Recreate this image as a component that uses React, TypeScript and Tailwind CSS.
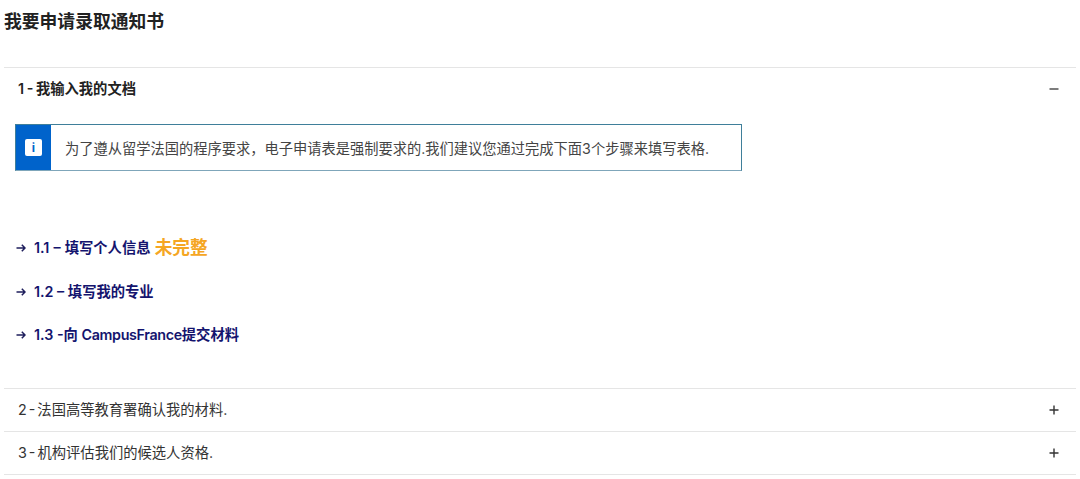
const font = "font-['Inter','Noto_Sans_CJK_SC',sans-serif]";

function ArrowIcon() {
  return (
    <svg width="10" height="10" viewBox="0 0 10 10" fill="none" stroke="#1e1e5c" strokeWidth="1.5" className="shrink-0">
      <path d="M0.5 5H9M5.8 1.8L9 5L5.8 8.2" />
    </svg>
  );
}

function StepLink({ children, extra }: { children: React.ReactNode; extra?: React.ReactNode }) {
  return (
    <div className="flex items-center h-[24px]">
      <ArrowIcon />
      <a className="ml-[8px] text-[14.3px] font-semibold text-[#14146e] whitespace-pre">{children}</a>
      {extra}
    </div>
  );
}

function Row({ label }: { label: string }) {
  return (
    <div className="flex items-center justify-between h-[43px] border-b border-[#e5e5e5] pl-[14px] pr-[17px]">
      <span className="text-[14.3px] text-[#333333] [word-spacing:-2px]">{label}</span>
      <svg width="10" height="10" viewBox="0 0 10 10" stroke="#333333" strokeWidth="1.4">
        <path d="M0.5 5H9.5M5 0.5V9.5" />
      </svg>
    </div>
  );
}

export default function App() {
  return (
    <div className={`${font} w-[1080px] h-[479px] overflow-hidden bg-white px-[4px]`}>
      <h2 className="h-[67px] pt-[9px] text-[17.8px] leading-[26px] font-bold text-[#222222]">我要申请录取通知书</h2>
      <div className="border-t border-[#e5e5e5] h-[321px]">
        <div className="flex items-center justify-between h-[41px] pl-[14px] pr-[17px]">
          <span className="text-[14.3px] font-semibold text-[#222222] [word-spacing:-1px]">1 - 我输入我的文档</span>
          <svg width="10" height="10" viewBox="0 0 10 10" stroke="#444444" strokeWidth="1.4">
            <path d="M0.5 5H9.5" />
          </svg>
        </div>
        <div className="ml-[11px] mt-[15px] flex w-[727px] h-[47px] border border-[#3f7f9a] border-b-[#7fa6ba]">
          <div className="flex items-center justify-center w-[35px] bg-[#0063cb]">
            <div className="flex items-center justify-center w-[17px] h-[17px] rounded-[2px] bg-white text-[12px] font-bold leading-none text-[#0063cb]">i</div>
          </div>
          <p className="ml-[14px] mt-[2px] self-center text-[14.25px] text-[#444444]">为了遵从留学法国的程序要求，电子申请表是强制要求的.我们建议您通过完成下面3个步骤来填写表格.</p>
        </div>
        <div className="ml-[12px] mt-[65px] flex flex-col gap-[19.5px]">
          <StepLink extra={<span className="text-[17.7px] font-semibold text-[#f5a623]">未完整</span>}>
            <span className="[word-spacing:0.5px]">1.1 – 填写个人信息 </span>
          </StepLink>
          <StepLink>1.2 – 填写我的专业</StepLink>
          <StepLink>
            1.3 -向 <span className="tracking-[-0.35px]">CampusFrance</span>提交材料
          </StepLink>
        </div>
      </div>
      <div className="border-t border-[#e5e5e5]">
        <Row label="2 - 法国高等教育署确认我的材料." />
        <Row label="3 - 机构评估我们的候选人资格." />
      </div>
    </div>
  );
}
